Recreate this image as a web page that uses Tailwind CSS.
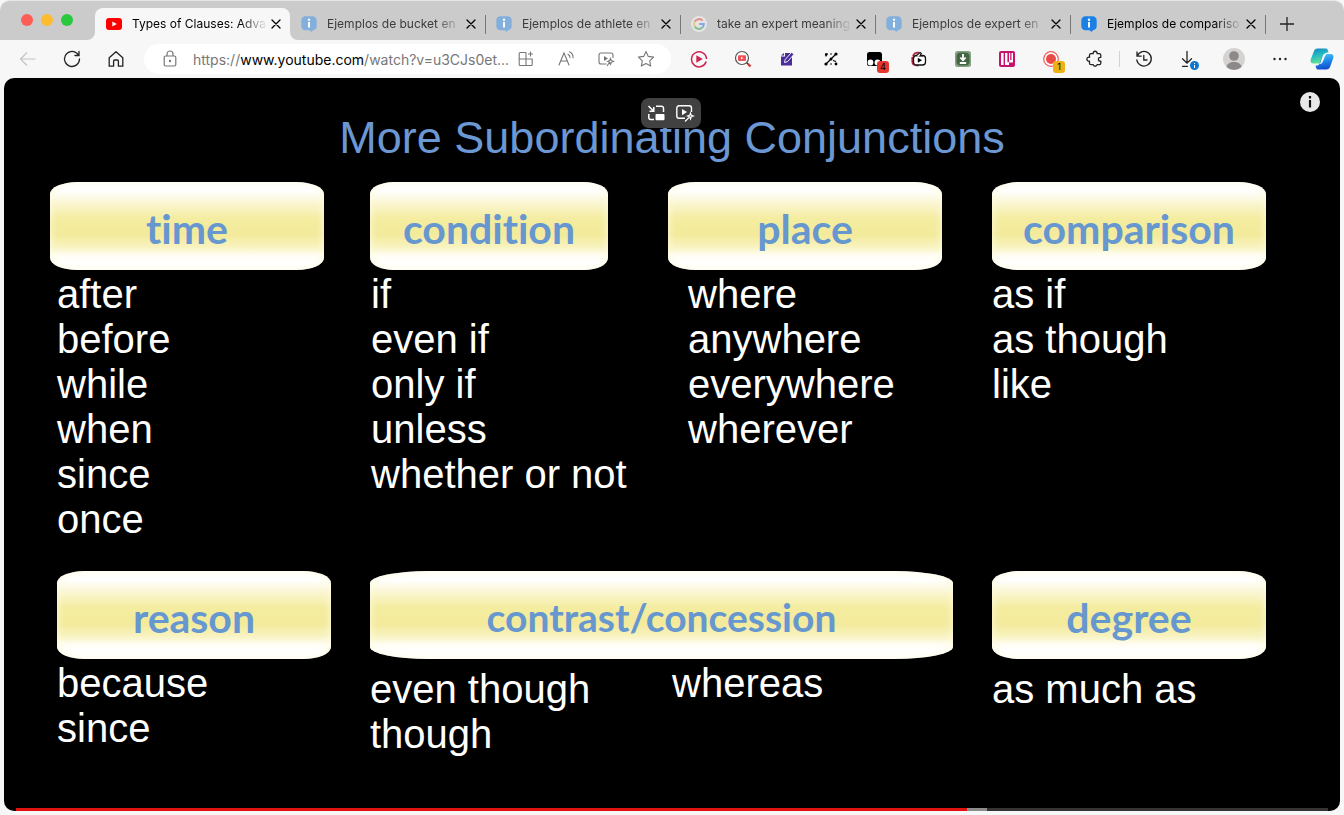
<!DOCTYPE html>
<html lang="en">
<head>
<meta charset="utf-8">
<meta name="viewport" content="width=device-width, initial-scale=1">
<title>Types of Clauses: Advanced</title>
<script src="https://cdn.jsdelivr.net/npm/@tailwindcss/browser@4"></script>
</head>
<body class="flex min-h-screen flex-col bg-[#f7f7f7] font-['Inter',sans-serif] text-black">

<!-- Shared symbols -->
<svg class="hidden" aria-hidden="true">
  <symbol id="info" viewBox="0 0 16 16"><path d="M4.500.3h7C14 .3 15.700 2 15.700 4.500v5.500c0 2.400-1.500 4-3.700 4.200l-1.700 1.700-1.600-1.600H4.500C2 14.300.3 12.500.3 10V4.500C.3 2 2 .3 4.500.3z" fill="currentColor"/><circle cx="8" cy="3.800" r="1.200" fill="#fff"/><path d="M8 6v5.500" stroke="#fff" stroke-width="1.900"/></symbol>
  <symbol id="close" viewBox="0 0 10 10"><path d="M1 1l8 8M9 1l-8 8" stroke="currentColor" stroke-width="1.300" stroke-linecap="round"/></symbol>
</svg>

<header>
  <nav aria-label="Tabs" class="flex h-10 items-stretch rounded-t-[10px] border-t border-[#e6e6e6] bg-[#cbcbcb] text-[12px] text-[#3c3c3c]">
    <div class="flex w-[95px] shrink-0 items-start gap-2 pt-[13px] pl-[21px]">
      <button aria-label="Close window" class="size-3 rounded-full bg-[#fc5d57]"></button>
      <button aria-label="Minimize window" class="size-3 rounded-full bg-[#fdbb2e]"></button>
      <button aria-label="Zoom window" class="size-3 rounded-full bg-[#28c83f]"></button>
    </div>

    <div class="relative mt-[7px] flex w-[195px] items-center rounded-t-lg bg-[#f7f7f7] pr-[5px] pl-[11px] text-black">
      <svg class="absolute bottom-0 -left-2 size-2" viewBox="0 0 8 8" aria-hidden="true"><path d="M8 0v8H0a8 8 0 0 0 8-8z" fill="#f7f7f7"/></svg>
      <svg class="absolute -right-2 bottom-0 size-2" viewBox="0 0 8 8" aria-hidden="true"><path d="M0 0v8h8a8 8 0 0 1-8-8z" fill="#f7f7f7"/></svg>
      <svg class="h-3 w-4 shrink-0" viewBox="0 0 16 12" aria-hidden="true"><rect width="16" height="12" rx="3" fill="#f00"/><path d="M6.300 3.400v5.200L10.800 6z" fill="#fff"/></svg>
      <a href="#" class="ml-[10px] min-w-0 flex-1 whitespace-nowrap [mask-image:linear-gradient(to_right,black_80%,transparent)]">Types of Clauses: Adva</a>
      <button aria-label="Close tab" class="p-1"><svg class="size-[10px]" aria-hidden="true"><use href="#close"/></svg></button>
    </div>

    <div class="mt-[7px] flex w-[195px] items-center pr-[5px] pl-[11px]">
      <svg class="size-4 shrink-0 text-[#82afdc]" aria-hidden="true"><use href="#info"/></svg>
      <a href="#" class="ml-[10px] min-w-0 flex-1 whitespace-nowrap [mask-image:linear-gradient(to_right,black_80%,transparent)]">Ejemplos de bucket en</a>
      <button aria-label="Close tab" class="p-1 text-black"><svg class="size-[10px]" aria-hidden="true"><use href="#close"/></svg></button>
    </div>
    <div class="mt-[14px] mb-[6px] w-px bg-[#777]"></div>
    <div class="mt-[7px] flex w-[194px] items-center pr-[5px] pl-[10px]">
      <svg class="size-4 shrink-0 text-[#82afdc]" aria-hidden="true"><use href="#info"/></svg>
      <a href="#" class="ml-[10px] min-w-0 flex-1 whitespace-nowrap [mask-image:linear-gradient(to_right,black_80%,transparent)]">Ejemplos de athlete en</a>
      <button aria-label="Close tab" class="p-1 text-black"><svg class="size-[10px]" aria-hidden="true"><use href="#close"/></svg></button>
    </div>
    <div class="mt-[14px] mb-[6px] w-px bg-[#777]"></div>
    <div class="mt-[7px] flex w-[194px] items-center pr-[5px] pl-[10px]">
      <svg class="size-4 shrink-0" viewBox="0 0 16 16" aria-hidden="true"><circle cx="8" cy="8" r="8" fill="#e4e4e4"/><g fill="none" stroke-width="2"><path d="M11.600 4.600A5 5 0 0 0 3.700 5.600" stroke="#e58b83"/><path d="M3.700 5.600a5 5 0 0 0 0 4.800" stroke="#e8cb7c"/><path d="M3.700 10.400a5 5 0 0 0 7.700 1.200" stroke="#86bd94"/><path d="M8.200 8h4.600a5 5 0 0 1-1.400 3.600" stroke="#85a9e0"/></g></svg>
      <a href="#" class="ml-[10px] min-w-0 flex-1 whitespace-nowrap [mask-image:linear-gradient(to_right,black_80%,transparent)]">take an expert meaning</a>
      <button aria-label="Close tab" class="p-1 text-black"><svg class="size-[10px]" aria-hidden="true"><use href="#close"/></svg></button>
    </div>
    <div class="mt-[14px] mb-[6px] w-px bg-[#777]"></div>
    <div class="mt-[7px] flex w-[194px] items-center pr-[5px] pl-[10px]">
      <svg class="size-4 shrink-0 text-[#82afdc]" aria-hidden="true"><use href="#info"/></svg>
      <a href="#" class="ml-[10px] min-w-0 flex-1 whitespace-nowrap [mask-image:linear-gradient(to_right,black_80%,transparent)]">Ejemplos de expert en</a>
      <button aria-label="Close tab" class="p-1 text-black"><svg class="size-[10px]" aria-hidden="true"><use href="#close"/></svg></button>
    </div>
    <div class="mt-[14px] mb-[6px] w-px bg-[#777]"></div>
    <div class="mt-[7px] flex w-[194px] items-center pr-[5px] pl-[10px] text-black">
      <svg class="size-4 shrink-0 text-[#1a80e5]" aria-hidden="true"><use href="#info"/></svg>
      <a href="#" class="ml-[10px] min-w-0 flex-1 whitespace-nowrap [mask-image:linear-gradient(to_right,black_80%,transparent)]">Ejemplos de compariso</a>
      <button aria-label="Close tab" class="p-1"><svg class="size-[10px]" aria-hidden="true"><use href="#close"/></svg></button>
    </div>
    <div class="mt-[14px] mb-[6px] w-px bg-[#777]"></div>
    <button aria-label="New tab" class="mt-[7px] ml-[13px] text-[#222]"><svg class="size-4" viewBox="0 0 16 16" aria-hidden="true"><path d="M8 1v14M1 8h14" stroke="currentColor" stroke-width="1.300"/></svg></button>
  </nav>

  <div class="flex h-[38px] items-center pr-[2px] pl-[6px] text-[#222]">
    <button aria-label="Back" class="flex w-11 justify-center text-[#c4c4c4]"><svg class="size-5" viewBox="0 0 20 20" fill="none" stroke="currentColor" stroke-width="1.200" aria-hidden="true"><path d="M17.500 10h-15M9 3.500L2.500 10 9 16.500"/></svg></button>
    <button aria-label="Reload" class="flex w-11 justify-center"><svg class="size-5" viewBox="0 0 20 20" fill="none" stroke="currentColor" stroke-width="1.300" stroke-linecap="round" aria-hidden="true"><path d="M17.500 10a7.500 7.500 0 1 1-2.600-5.700l2 2M17 2.500v4h-4"/></svg></button>
    <button aria-label="Home" class="flex w-11 justify-center"><svg class="size-5" viewBox="0 0 20 20" fill="none" stroke="currentColor" stroke-width="1.300" stroke-linejoin="round" aria-hidden="true"><path d="M3.200 8.800L10 2.800l6.800 6v8.400H12.400V12a1 1 0 0 0-1-1H8.600a1 1 0 0 0-1 1v5.200H3.200z"/></svg></button>

    <div class="mx-[6px] flex h-[30px] min-w-0 flex-1 items-center rounded-full bg-white pr-[5px] pl-4 text-[#777]">
      <button aria-label="Site information"><svg class="size-5" viewBox="0 0 20 20" fill="none" stroke="currentColor" stroke-width="1.200" aria-hidden="true"><rect x="4.200" y="7" width="11.600" height="10" rx="1.500"/><path d="M7 7V5a3 3 0 0 1 6 0v2"/><circle cx="10" cy="12" r=".6" fill="currentColor"/></svg></button>
      <div role="textbox" aria-label="Address" contenteditable="true" class="ml-[13px] min-w-0 flex-1 text-[14px] whitespace-nowrap">https://<span class="text-black">www.youtube.com</span>/watch?v=u3CJs0et...</div>
      <div class="flex shrink-0">
        <button aria-label="Apps" class="flex w-10 justify-center"><svg class="size-[18px]" viewBox="0 0 18 18" fill="none" stroke="currentColor" stroke-width="1.100" aria-hidden="true"><path d="M9 2.500H3.200a1 1 0 0 0-1 1v11a1 1 0 0 0 1 1h11a1 1 0 0 0 1-1V9H2.200M9 2.500v13M13.500 1.500v5M11 4h5"/></svg></button>
        <button aria-label="Read aloud" class="flex w-10 justify-center"><svg class="size-[18px]" viewBox="0 0 18 18" fill="none" stroke="currentColor" stroke-width="1.100" stroke-linecap="round" aria-hidden="true"><path d="M2 15L7 3l5 12M3.700 11h6.600M11 4.200a4 4 0 0 1 2 3.300M12.500 1.800a6 6 0 0 1 3.500 6"/></svg></button>
        <button aria-label="Enhance video" class="flex w-10 justify-center"><svg class="size-[18px]" viewBox="0 0 18 18" fill="none" stroke="currentColor" stroke-width="1.100" aria-hidden="true"><path d="M16 8V5a2 2 0 0 0-2-2H4a2 2 0 0 0-2 2v7a2 2 0 0 0 2 2h5.500"/><path d="M7 6v5l4-2.500z" fill="currentColor" stroke="none"/><path d="M13.500 8.500l.8 2 2.200.9-2.200.9-.8 2-.8-2-2-.9 2-.9zM12.500 12.500L10 16"/></svg></button>
        <button aria-label="Favorite" class="flex w-10 justify-center"><svg class="size-[18px]" viewBox="0 0 18 18" fill="none" stroke="currentColor" stroke-width="1.100" stroke-linejoin="round" aria-hidden="true"><path d="M9 1.500l2.300 4.900 5.300.7-3.900 3.700 1 5.300L9 13.500l-4.700 2.600 1-5.300L1.400 7.100l5.300-.7z"/></svg></button>
      </div>
    </div>

    <button aria-label="Video player extension" class="flex w-11 justify-center"><svg class="size-[18px]" viewBox="0 0 18 18" aria-hidden="true"><path d="M16.200 11.500A7.500 7.500 0 1 1 16.500 9M14.500 14a7.500 7.500 0 0 0 1.500-2" fill="none" stroke="#cf2351" stroke-width="1.500"/><path d="M6.300 5.200v7.600L12.800 9z" fill="#cf2351"/></svg></button>
    <button aria-label="Video search extension" class="flex w-11 justify-center"><svg class="size-[18px]" viewBox="0 0 18 18" aria-hidden="true"><circle cx="8" cy="8" r="6.500" fill="#fff" stroke="#555" stroke-width="1.200"/><rect x="4" y="5.200" width="8" height="5.800" rx="1" fill="#f05156"/><path d="M7 6.700v2.700L9.300 8z" fill="#fff"/><path d="M12.800 12.800l1.500 1.500" stroke="#333" stroke-width="1.500"/><path d="M14 14l2.500 2.500" stroke="#e0343a" stroke-width="2.400"/></svg></button>
    <button aria-label="Notes extension" class="flex w-11 justify-center"><svg class="size-4" viewBox="0 0 16 16" aria-hidden="true"><path d="M6 2h7v12.500H2V5.500H6z" fill="#4a2d9b"/><path d="M2 4.600L5 2v2.600z" fill="#4a2d9b"/><path d="M5.500 11.500l.7-3L12.700 1.300l2.300 2L8.500 10.700z" fill="#4a2d9b" stroke="#fff" stroke-width=".9"/></svg></button>
    <button aria-label="Graph extension" class="flex w-11 justify-center"><svg class="size-4" viewBox="0 0 16 16" aria-hidden="true"><path d="M3 13L13 3M3 5.500V3h2M13 10.500L10 9.500" fill="none" stroke="#000" stroke-width="1.200"/><g fill="#000"><circle cx="3.200" cy="3.500" r="1.300"/><circle cx="13" cy="3" r="1.600"/><circle cx="3" cy="13" r="1.600"/><circle cx="13" cy="13" r="1.400"/><circle cx="8" cy="8" r="1.500"/><circle cx="8" cy="13" r=".8"/><circle cx="8" cy="3" r=".8"/></g></svg></button>
    <button aria-label="Script extension, 4 active" class="relative flex w-11 justify-center"><svg class="size-4" viewBox="0 0 16 16" aria-hidden="true"><rect x="0" y="1" width="15" height="14" rx="2.500" fill="#000"/><circle cx="3.500" cy="11.500" r="2.900" fill="#fff"/><circle cx="10.500" cy="11.500" r="2.900" fill="#fff"/></svg><span class="absolute top-[10px] left-6 flex h-3 w-3 items-center justify-center rounded-[3px] bg-[#e5352f] text-[9px] text-black">4</span></button>
    <button aria-label="Video like extension" class="flex w-11 justify-center"><svg class="size-4" viewBox="0 0 16 16" aria-hidden="true"><path d="M2 5.500C2.500 2.500 5 1.300 8 1.600M1.300 6v4.500c0 2.800 2.700 4 6 4" stroke="#b32440" stroke-width="1.800" fill="none"/><rect x="2.500" y="4.500" width="12" height="9.500" rx="3" fill="#fff" stroke="#111" stroke-width="1.300"/><path d="M5 5l4-3.500 1.300 1L9 5h3" fill="#fff" stroke="#111" stroke-width="1.200"/><path d="M6.800 6.800v5L11 9.300z" fill="#000"/></svg></button>
    <button aria-label="Download helper extension" class="flex w-11 justify-center"><svg class="size-4" viewBox="0 0 16 16" aria-hidden="true"><rect width="16" height="16" rx="2.500" fill="#86a283"/><rect x="1.500" y="1.500" width="13" height="13" rx="4" fill="#426542"/><path d="M8 3v6M5.300 6.500L8 9.300l2.700-2.800M4.800 12h6.400" stroke="#fff" stroke-width="1.800" fill="none"/></svg></button>
    <button aria-label="Language extension" class="flex w-11 justify-center"><svg class="size-4" viewBox="0 0 16 16" aria-hidden="true"><rect width="16" height="16" rx="2" fill="#c6136f"/><path d="M2 2h2.600v12H2zM6 2h2.400v9.300H10V14H6z M10 2h1.200v7h1.300V2H14v9.500h-4z" fill="#fff"/></svg></button>
    <button aria-label="Recorder extension, 1 active" class="relative flex w-11 justify-center"><svg class="size-4" viewBox="0 0 16 16" aria-hidden="true"><circle cx="8" cy="8" r="7.300" fill="#fff" stroke="#ef5b58" stroke-width="1.200"/><circle cx="8" cy="8" r="5" fill="#ea4a47"/></svg><span class="absolute top-[10px] left-6 flex h-3 w-3 items-center justify-center rounded-[3px] bg-[#eeb111] text-[9px] text-black">1</span></button>
    <button aria-label="Extensions" class="flex w-11 justify-center"><svg class="size-[18px]" viewBox="0 0 18 18" fill="none" stroke="currentColor" stroke-width="1.300" stroke-linejoin="round" aria-hidden="true"><path d="M5 3.700h2.200a2 2 0 1 1 3.900 0h2.200a1.500 1.500 0 0 1 1.500 1.500v2.100h-.5a1.900 1.900 0 0 0 0 3.800h.5v2.100a1.500 1.500 0 0 1-1.500 1.500h-2.200a2 2 0 0 1-3.900 0H5a1.500 1.500 0 0 1-1.500-1.500v-2.100a2 2 0 1 1 0-3.800V5.200A1.500 1.500 0 0 1 5 3.700z"/></svg></button>
    <div class="mx-[2px] h-4 w-px bg-[#d2d2d2]"></div>
    <button aria-label="History" class="flex w-11 justify-center"><svg class="size-[18px]" viewBox="0 0 18 18" fill="none" stroke="currentColor" stroke-width="1.300" stroke-linecap="round" aria-hidden="true"><path d="M2.200 6A7.300 7.300 0 1 1 1.800 10M2 2v4.200h4.200M8.800 5.500V10h3.200"/></svg></button>
    <button aria-label="Downloads" class="relative flex w-11 justify-center"><svg class="size-[18px]" viewBox="0 0 18 18" fill="none" stroke="currentColor" stroke-width="1.300" stroke-linecap="round" aria-hidden="true"><path d="M8 1.500v11.500M3.500 8.800L8 13.200l4.500-4.400M3.500 16.300h5"/></svg><svg class="absolute top-[11px] left-6 size-[9px]" viewBox="0 0 9 9" aria-hidden="true"><circle cx="4.500" cy="4.500" r="4.500" fill="#0d76d1"/><path d="M4.500 2v1M4.500 4v3" stroke="#fff"/></svg></button>
    <button aria-label="Profile" class="flex w-12 justify-center"><svg class="size-[22px]" viewBox="0 0 22 22" aria-hidden="true"><circle cx="11" cy="11" r="11" fill="#d5d3d1"/><circle cx="11" cy="8" r="4.800" fill="#8c8988"/><path d="M3.500 19c.5-3.500 3.500-5 7.500-5s7 1.500 7.500 5a11 11 0 0 1-15 0z" fill="#8c8988"/></svg></button>
    <button aria-label="Settings and more" class="flex w-11 justify-center"><svg class="h-4 w-4" viewBox="0 0 16 16" fill="#222" aria-hidden="true"><circle cx="2.500" cy="8" r="1.200"/><circle cx="8" cy="8" r="1.200"/><circle cx="13.500" cy="8" r="1.200"/></svg></button>
    <button aria-label="Copilot" class="flex w-10 justify-center"><svg class="h-[22px] w-6" viewBox="0 0 24 22" aria-hidden="true"><defs><linearGradient id="ca" x2=".3" y2="1"><stop stop-color="#137fc4"/><stop offset=".5" stop-color="#23bac2"/><stop offset="1" stop-color="#64df91"/></linearGradient><linearGradient id="cb" x2=".2" y2="1"><stop stop-color="#57c8f2"/><stop offset=".5" stop-color="#1f8fee"/><stop offset="1" stop-color="#1550cf"/></linearGradient></defs><path d="M7.500.5h8c1.200 0 2 .6 2.300 1.600l.7 2.400c-2.300-.2-3.500.3-4.300 2.500l-2.200 6c-.6 1.700-1.600 2.500-3.300 2.500H3.400C1 15.500 0 13.800.7 11.500L4 3C4.600 1.400 5.700.5 7.500.5z" fill="url(#ca)"/><path d="M16.500 21.500h-8c-1.200 0-2-.6-2.300-1.600L5.500 17.500c2.300.2 3.500-.3 4.300-2.500L12 8.500C12.600 6.800 13.600 6 15.300 6h5.300c2.400 0 3.400 1.700 2.700 4L20 19c-.6 1.600-1.700 2.500-3.500 2.500z" fill="url(#cb)"/><path d="M13.300 6.800c1-.9 2-.9 3-.3-1.200.8-1.500 2-2 3.500l-1.700 4c-.5 1.200-1.500 2-3 2 .8-1 1.200-2 1.500-3z" fill="#fff"/></svg></button>
  </div>
</header>

<main class="relative mx-1 mb-1 flex flex-1 flex-col overflow-hidden rounded-[10px] bg-black font-['Liberation_Sans',sans-serif] text-white">
  <h1 class="mt-[33px] text-center text-[45px] leading-[54px] text-[#6b97d3]">More Subordinating Conjunctions</h1>

  <div class="mt-[17px] grid grid-cols-[320fr_298fr_324fr_274fr] pr-[74px] pl-[46px] text-[40px] leading-[45px] whitespace-nowrap">
    <section>
      <h2 class="mr-[46px] flex h-[88px] items-center justify-center rounded-[10%/14%] bg-[linear-gradient(to_bottom,#fff_10%,#faf5cf_25%,#f4ec9f_42%,#f3ea9b_60%,#f8f3c0_74%,#fffdf2_83%,#fff_90%)] pt-1 font-['Lato',sans-serif] text-[41px] font-bold text-[#6797cf] shadow-[inset_0_0_10px_#fffbe0] [font-variant-ligatures:none]">time</h2>
      <ul class="h-[270px] pt-[2px] pl-[7px]"><li>after</li><li>before</li><li>while</li><li>when</li><li>since</li><li>once</li></ul>
    </section>
    <section>
      <h2 class="mr-[60px] flex h-[88px] items-center justify-center rounded-[10%/14%] bg-[linear-gradient(to_bottom,#fff_10%,#faf5cf_25%,#f4ec9f_42%,#f3ea9b_60%,#f8f3c0_74%,#fffdf2_83%,#fff_90%)] pt-1 font-['Lato',sans-serif] text-[41px] font-bold text-[#6797cf] shadow-[inset_0_0_10px_#fffbe0] [font-variant-ligatures:none]">condition</h2>
      <ul class="pt-[2px] pl-px"><li>if</li><li>even if</li><li>only if</li><li>unless</li><li>whether or not</li></ul>
    </section>
    <section>
      <h2 class="mr-[50px] flex h-[88px] items-center justify-center rounded-[10%/14%] bg-[linear-gradient(to_bottom,#fff_10%,#faf5cf_25%,#f4ec9f_42%,#f3ea9b_60%,#f8f3c0_74%,#fffdf2_83%,#fff_90%)] pt-1 font-['Lato',sans-serif] text-[41px] font-bold text-[#6797cf] shadow-[inset_0_0_10px_#fffbe0] [font-variant-ligatures:none]">place</h2>
      <ul class="pt-[2px] pl-5"><li>where</li><li>anywhere</li><li>everywhere</li><li>wherever</li></ul>
    </section>
    <section>
      <h2 class="flex h-[88px] items-center justify-center rounded-[10%/14%] bg-[linear-gradient(to_bottom,#fff_10%,#faf5cf_25%,#f4ec9f_42%,#f3ea9b_60%,#f8f3c0_74%,#fffdf2_83%,#fff_90%)] pt-1 font-['Lato',sans-serif] text-[41px] font-bold text-[#6797cf] shadow-[inset_0_0_10px_#fffbe0] [font-variant-ligatures:none]">comparison</h2>
      <ul class="pt-[2px]"><li>as if</li><li>as though</li><li>like</li></ul>
    </section>
  </div>

  <div class="mt-[31px] grid grid-cols-[313fr_622fr_274fr] pr-[74px] pl-[53px] text-[40px] leading-[45px] whitespace-nowrap">
    <section>
      <h2 class="mr-[39px] flex h-[88px] items-center justify-center rounded-[10%/14%] bg-[linear-gradient(to_bottom,#fff_10%,#faf5cf_25%,#f4ec9f_42%,#f3ea9b_60%,#f8f3c0_74%,#fffdf2_83%,#fff_90%)] pt-1 font-['Lato',sans-serif] text-[41px] font-bold text-[#6797cf] shadow-[inset_0_0_10px_#fffbe0] [font-variant-ligatures:none]">reason</h2>
      <ul class="pt-[2px]"><li>because</li><li>since</li></ul>
    </section>
    <section>
      <h2 class="mr-[39px] flex h-[88px] items-center justify-center rounded-[10%/14%] bg-[linear-gradient(to_bottom,#fff_10%,#faf5cf_25%,#f4ec9f_42%,#f3ea9b_60%,#f8f3c0_74%,#fffdf2_83%,#fff_90%)] pt-1 font-['Lato',sans-serif] text-[39px] font-bold text-[#6797cf] shadow-[inset_0_0_10px_#fffbe0] [font-variant-ligatures:none]">contrast/concession</h2>
      <div class="grid grid-cols-[302fr_320fr]">
        <ul class="pt-2"><li>even though</li><li>though</li></ul>
        <ul class="pt-[2px]"><li>whereas</li></ul>
      </div>
    </section>
    <section>
      <h2 class="flex h-[88px] items-center justify-center rounded-[10%/14%] bg-[linear-gradient(to_bottom,#fff_10%,#faf5cf_25%,#f4ec9f_42%,#f3ea9b_60%,#f8f3c0_74%,#fffdf2_83%,#fff_90%)] pt-1 font-['Lato',sans-serif] text-[41px] font-bold text-[#6797cf] shadow-[inset_0_0_10px_#fffbe0] [font-variant-ligatures:none]">degree</h2>
      <ul class="pt-2"><li>as much as</li></ul>
    </section>
  </div>

  <div role="progressbar" aria-label="Playback position" aria-valuenow="72" aria-valuemin="0" aria-valuemax="100" class="mx-3 mt-auto flex h-[3px] bg-[#333]">
    <div class="bg-[#e01210]" style="width:72.5%"></div>
    <div class="bg-[#8c8c8c]" style="width:1.5%"></div>
  </div>

  <div class="absolute top-5 left-1/2 flex h-[30px] w-[60px] -translate-x-[31px] items-center justify-center gap-[10px] rounded-lg bg-[#414141]">
    <button aria-label="Picture in picture"><svg class="size-[18px]" viewBox="0 0 18 18" fill="none" stroke="#fff" stroke-width="1.500" aria-hidden="true"><path d="M9 2.200h5.500a2 2 0 0 1 2 2V8M1.800 10v3.500a2 2 0 0 0 2 2H7M1.500 2l5 5M6.800 3v4.200H2.500"/><rect x="8.500" y="10" width="9" height="6.300" rx="1" fill="#fff" stroke="none"/></svg></button>
    <button aria-label="Enhance video"><svg class="size-5" viewBox="0 0 20 20" fill="none" stroke="#fff" stroke-width="1.400" aria-hidden="true"><path d="M16.500 9V5a2.200 2.200 0 0 0-2.200-2.200H4A2.200 2.200 0 0 0 1.800 5v8A2.200 2.200 0 0 0 4 15.200h6"/><path d="M7 6v6.200l5-3.100z" fill="#fff" stroke="none"/><path d="M15.500 10l.8 2.200 2.200.8-2.200.8-.8 2.200-.8-2.200-2.200-.8 2.200-.8zM14 14.500L10 18.500" stroke-width="1.200"/></svg></button>
  </div>

  <button aria-label="Video information" class="absolute top-[14px] right-5"><svg class="size-5" viewBox="0 0 20 20" aria-hidden="true"><circle cx="10" cy="10" r="10" fill="#e8e8e8"/><path d="M10 4v2.400M10 8v7.500" stroke="#111" stroke-width="2.200"/></svg></button>
</main>
</body>
</html>
